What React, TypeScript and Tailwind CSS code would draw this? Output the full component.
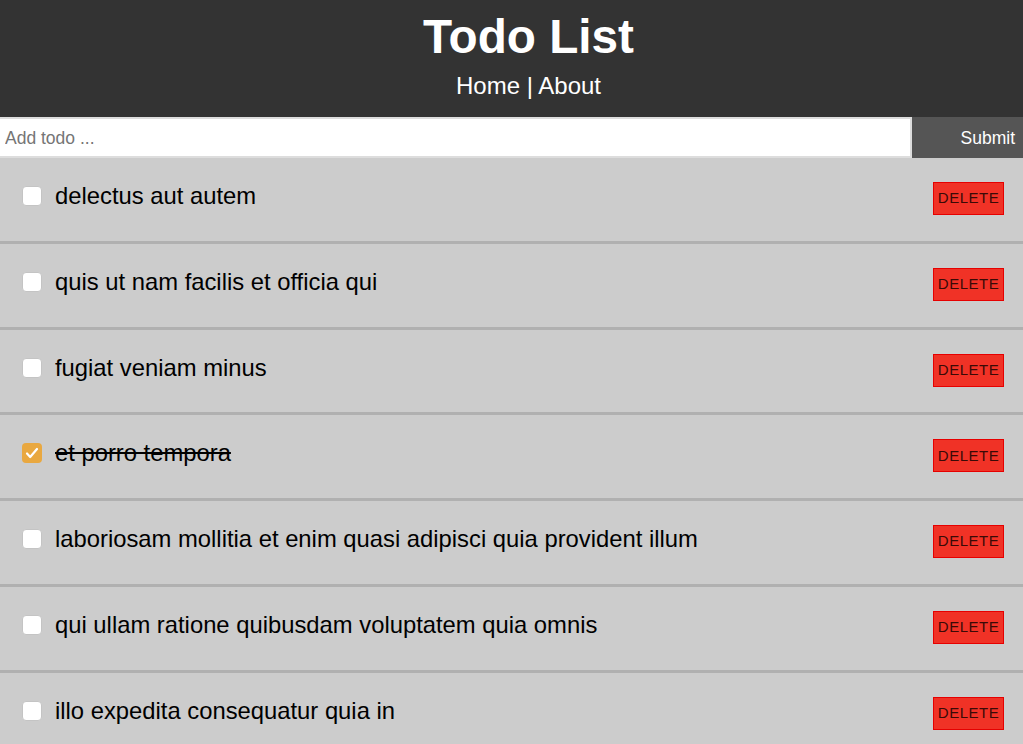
import { useState } from 'react';

type Todo = { id: number; title: string; completed: boolean };

const initialTodos: Todo[] = [
  { id: 1, title: 'delectus aut autem', completed: false },
  { id: 2, title: 'quis ut nam facilis et officia qui', completed: false },
  { id: 3, title: 'fugiat veniam minus', completed: false },
  { id: 4, title: 'et porro tempora', completed: true },
  { id: 5, title: 'laboriosam mollitia et enim quasi adipisci quia provident illum', completed: false },
  { id: 6, title: 'qui ullam ratione quibusdam voluptatem quia omnis', completed: false },
  { id: 7, title: 'illo expedita consequatur quia in', completed: false },
];

function TodoItem({
  todo,
  onToggle,
  onDelete,
}: {
  todo: Todo;
  onToggle: (id: number) => void;
  onDelete: (id: number) => void;
}) {
  return (
    <div className="flex h-[85.75px] items-start border-b-[3px] border-[#b0b0b0] bg-[#cccccc] pl-[22px] pr-[19px] pt-[23px]">
      <button
        onClick={() => onToggle(todo.id)}
        className={
          todo.completed
            ? 'mt-[5px] flex h-[20px] w-[20px] shrink-0 items-center justify-center rounded-[4px] bg-[#e9a840]'
            : 'mt-[5px] h-[20px] w-[20px] shrink-0 rounded-[4px] border border-[#c4c4c4] bg-white'
        }
      >
        {todo.completed && (
          <svg viewBox="0 0 20 20" className="h-[20px] w-[20px]">
            <path d="M5 10.5l3.2 3.5L15 6" fill="none" stroke="white" strokeWidth="2.2" strokeLinecap="round" strokeLinejoin="round" />
          </svg>
        )}
      </button>
      <span
        className={
          todo.completed
            ? 'ml-[13px] flex-1 text-[23.8px] leading-[29px] text-black line-through'
            : 'ml-[13px] flex-1 text-[23.8px] leading-[29px] text-black'
        }
      >
        {todo.title}
      </span>
      <button
        onClick={() => onDelete(todo.id)}
        className="mt-[1px] h-[33px] w-[71px] border border-[#e60000] bg-[#f03226] text-[15px] tracking-[0.5px] text-[#3a0a06]"
      >
        DELETE
      </button>
    </div>
  );
}

export default function App() {
  const [todos, setTodos] = useState<Todo[]>(initialTodos);
  const [title, setTitle] = useState('');

  const toggle = (id: number) =>
    setTodos(todos.map((t) => (t.id === id ? { ...t, completed: !t.completed } : t)));
  const remove = (id: number) => setTodos(todos.filter((t) => t.id !== id));

  const handleSubmit = (e: React.FormEvent) => {
    e.preventDefault();
    if (!title.trim()) return;
    setTodos([...todos, { id: Date.now(), title: title.trim(), completed: false }]);
    setTitle('');
  };

  return (
    <div className="min-h-screen bg-[#cccccc] font-['Liberation_Sans',Arial,sans-serif]">
      {/* Header */}
      <header className="flex h-[117px] flex-col items-center bg-[#333333] pl-[34px] pt-[8px] text-white">
        <h1 className="text-[47.7px] font-bold leading-[58px]">Todo List</h1>
        <nav className="mt-[5px] text-[24px] leading-[30px]">
          <a href="#">Home</a> | <a href="#">About</a>
        </nav>
      </header>

      {/* Add Todo */}
      <form onSubmit={handleSubmit} className="flex h-[41px]">
        <input
          type="text"
          value={title}
          onChange={(e) => setTitle(e.target.value)}
          placeholder="Add todo ..."
          className="flex-1 border-y-2 border-r-2 border-[#dddddd] bg-white px-[5px] pt-[1px] text-[17.5px] text-black outline-none placeholder:text-[#757575]"
        />
        <button type="submit" className="w-[111px] bg-[#555555] pr-[8px] pt-[1px] text-right text-[17.5px] text-white">
          Submit
        </button>
      </form>

      {/* Todos */}
      <div>
        {todos.map((todo) => (
          <TodoItem key={todo.id} todo={todo} onToggle={toggle} onDelete={remove} />
        ))}
      </div>
    </div>
  );
}
